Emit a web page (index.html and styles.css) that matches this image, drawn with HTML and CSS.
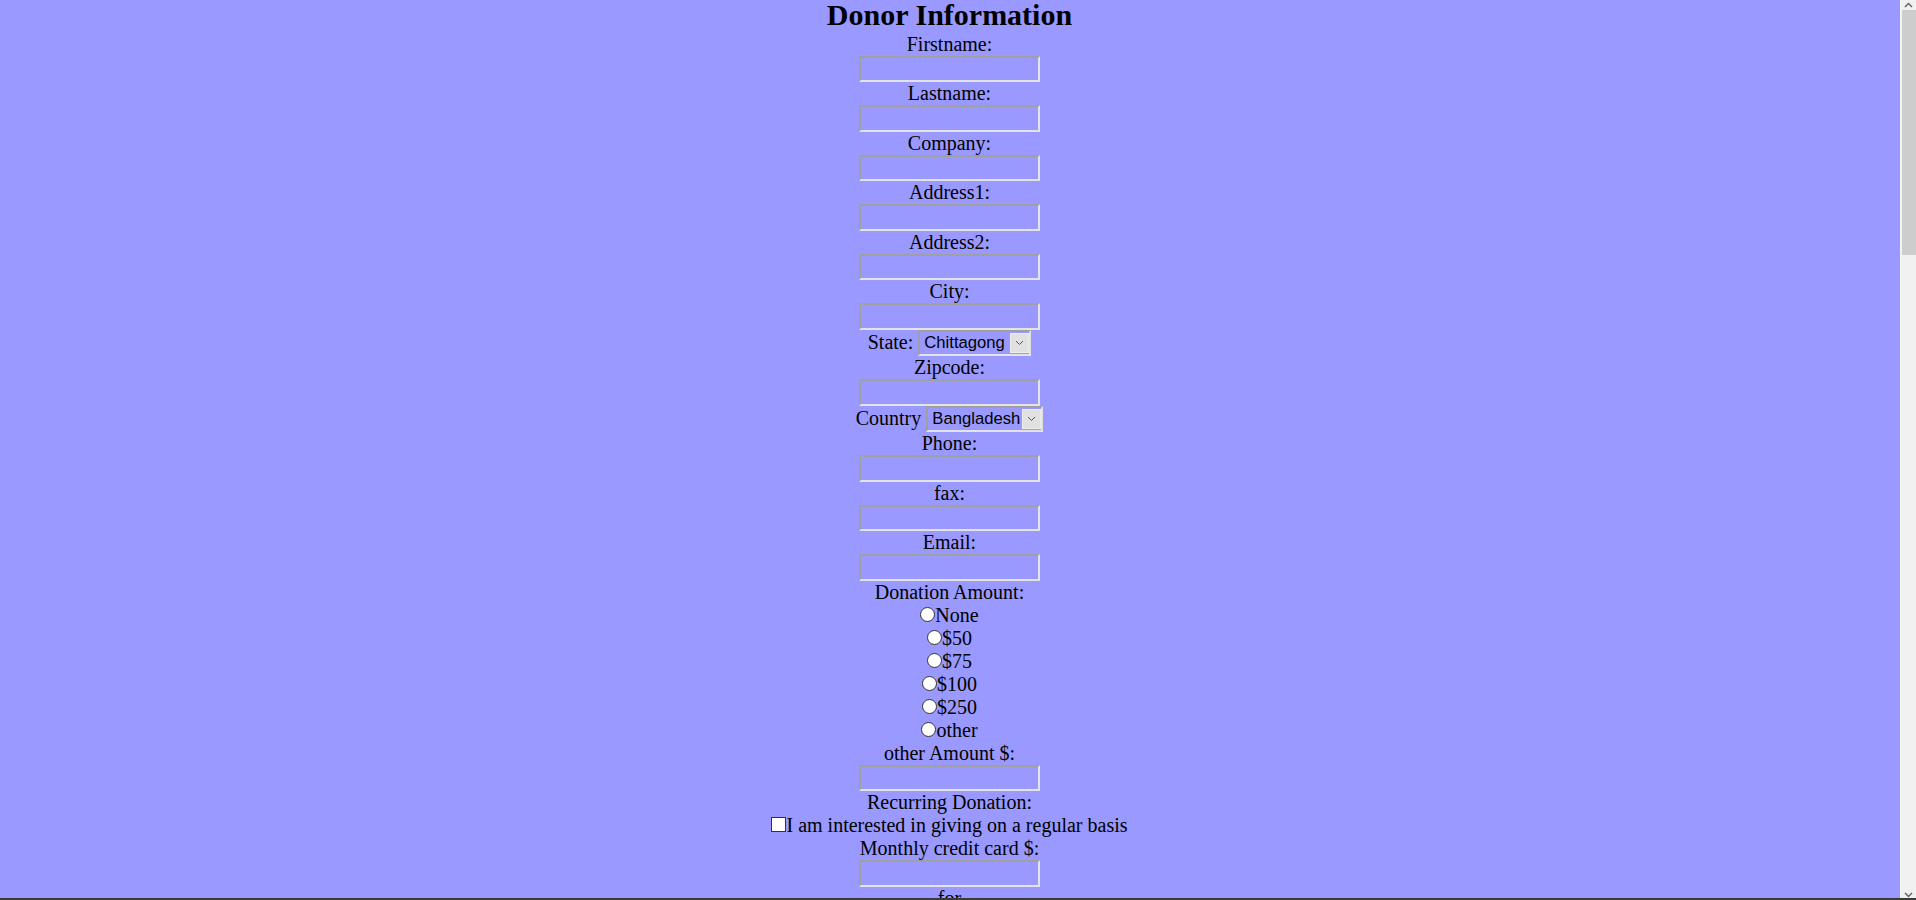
FILE: index.html
```html
<!DOCTYPE html>
<html lang="en">
<head>
<meta charset="utf-8">
<title>Donor Information</title>
<link rel="stylesheet" href="styles.css">
</head>
<body>
<form class="donor-form">
  <h1 class="title">Donor Information</h1>

  <div class="label">Firstname:</div>
  <input class="field" type="text" name="firstname">
  <div class="label">Lastname:</div>
  <input class="field" type="text" name="lastname">
  <div class="label">Company:</div>
  <input class="field" type="text" name="company">
  <div class="label">Address1:</div>
  <input class="field" type="text" name="address1">
  <div class="label">Address2:</div>
  <input class="field" type="text" name="address2">
  <div class="label">City:</div>
  <input class="field" type="text" name="city">

  <div class="select-row">
    <span class="row-label">State:</span>
    <span class="select-wrap select-state">
      <select name="state">
        <option>Chittagong</option>
        <option>Dhaka</option>
        <option>Khulna</option>
        <option>Rajshahi</option>
        <option>Sylhet</option>
        <option>Barisal</option>
      </select>
      <span class="select-btn"><svg width="9" height="6" viewBox="0 0 9 6"><path d="M1 1 L4.5 4.5 L8 1" fill="none" stroke="#555" stroke-width="1"/></svg></span>
    </span>
  </div>

  <div class="label">Zipcode:</div>
  <input class="field" type="text" name="zipcode">

  <div class="select-row">
    <span class="row-label">Country</span>
    <span class="select-wrap select-country">
      <select name="country">
        <option>Bangladesh</option>
        <option>India</option>
        <option>Nepal</option>
      </select>
      <span class="select-btn"><svg width="9" height="6" viewBox="0 0 9 6"><path d="M1 1 L4.5 4.5 L8 1" fill="none" stroke="#555" stroke-width="1"/></svg></span>
    </span>
  </div>

  <div class="label">Phone:</div>
  <input class="field" type="text" name="phone">
  <div class="label">fax:</div>
  <input class="field" type="text" name="fax">
  <div class="label">Email:</div>
  <input class="field" type="text" name="email">

  <div class="label">Donation Amount:</div>
  <label class="choice"><input class="radio" type="radio" name="amount" value="0">None</label>
  <label class="choice"><input class="radio" type="radio" name="amount" value="50">$50</label>
  <label class="choice"><input class="radio" type="radio" name="amount" value="75">$75</label>
  <label class="choice"><input class="radio" type="radio" name="amount" value="100">$100</label>
  <label class="choice"><input class="radio" type="radio" name="amount" value="250">$250</label>
  <label class="choice"><input class="radio" type="radio" name="amount" value="other">other</label>

  <div class="label">other Amount $:</div>
  <input class="field" type="text" name="other_amount">

  <div class="label">Recurring Donation:</div>
  <label class="choice"><input class="check" type="checkbox" name="recurring">I am interested in giving on a regular basis</label>

  <div class="label">Monthly credit card $:</div>
  <input class="field" type="text" name="monthly">

  <div class="label">for</div>
  <input class="field" type="text" name="months">
  <div class="label">months</div>
</form>

<div class="scrollbar" aria-hidden="true">
  <div class="scroll-arrow"><svg width="9" height="6" viewBox="0 0 9 6"><path d="M1 5 L4.5 1.5 L8 5" fill="none" stroke="#606060" stroke-width="1.4"/></svg></div>
  <div class="scroll-track"><div class="scroll-thumb"></div></div>
  <div class="scroll-arrow"><svg width="9" height="6" viewBox="0 0 9 6"><path d="M1 1 L4.5 4.5 L8 1" fill="none" stroke="#606060" stroke-width="1.4"/></svg></div>
</div>
<div class="screen-edge"></div>
</body>
</html>
```

FILE: styles.css
```css
html {
  background: #9999ff;
}

body {
  margin: 0;
  padding: 0 17px 0 0;
  background: #9999ff;
  color: #000;
  font-family: "Liberation Serif", "Times New Roman", serif;
  font-size: 20px;
}

.donor-form {
  display: flex;
  flex-direction: column;
  align-items: center;
  min-height: 3225px;
}

.title {
  margin: 0;
  padding-bottom: 2.5px;
  font-size: 30px;
  line-height: 30px;
  font-weight: bold;
  text-align: center;
}

.label {
  line-height: 23px;
  text-align: center;
}

.field {
  display: block;
  box-sizing: border-box;
  width: 181px;
  height: 26.5px;
  margin: 0;
  padding: 0 3px;
  border: 2px solid;
  border-color: #a0a0a0 #e3e3e3 #e3e3e3 #a0a0a0;
  background: transparent;
  font-family: "Liberation Sans", Arial, sans-serif;
  font-size: 16.67px;
  outline: none;
}

.select-row {
  display: flex;
  justify-content: center;
  align-items: center;
  gap: 5px;
  height: 26.5px;
}

.row-label {
  line-height: 23px;
}

.select-wrap {
  display: inline-flex;
  box-sizing: border-box;
  height: 26px;
  border: 2px solid;
  border-color: #a0a0a0 #e3e3e3 #e3e3e3 #a0a0a0;
}

.select-state {
  width: 113px;
}

.select-country {
  width: 117px;
}

.select-wrap select {
  flex: 1;
  min-width: 0;
  -webkit-appearance: none;
  appearance: none;
  margin: 0;
  padding: 0 0 0 4px;
  border: 0;
  background: transparent;
  color: #000;
  font-family: "Liberation Sans", Arial, sans-serif;
  font-size: 16.67px;
  outline: none;
}

.select-btn {
  display: flex;
  align-items: center;
  justify-content: center;
  box-sizing: border-box;
  width: 19px;
  margin: 1px 0;
  background: #e1e1e1;
  border: 1px solid #ececec;
}

.choice {
  display: block;
  line-height: 23px;
  text-align: center;
}

.radio,
.check {
  -webkit-appearance: none;
  appearance: none;
  box-sizing: border-box;
  width: 15px;
  height: 15px;
  margin: 0;
  background: #fff;
  border: 1px solid #333;
  vertical-align: baseline;
}

.radio {
  border-radius: 50%;
}

.scrollbar {
  position: fixed;
  top: 0;
  right: 0;
  bottom: 0;
  width: 15px;
  display: flex;
  flex-direction: column;
  background: #f1f1f1;
  border-left: 1px solid #f6f6f6;
}

.scroll-arrow {
  display: flex;
  align-items: center;
  justify-content: center;
  height: 10px;
}

.scroll-track {
  flex: 1;
  padding-left: 1px;
}

.scroll-thumb {
  height: 245px;
  background: #cdcdcd;
}

.screen-edge {
  position: fixed;
  left: 0;
  right: 0;
  bottom: 0;
  height: 2px;
  background: #3a3a3a;
}
```
